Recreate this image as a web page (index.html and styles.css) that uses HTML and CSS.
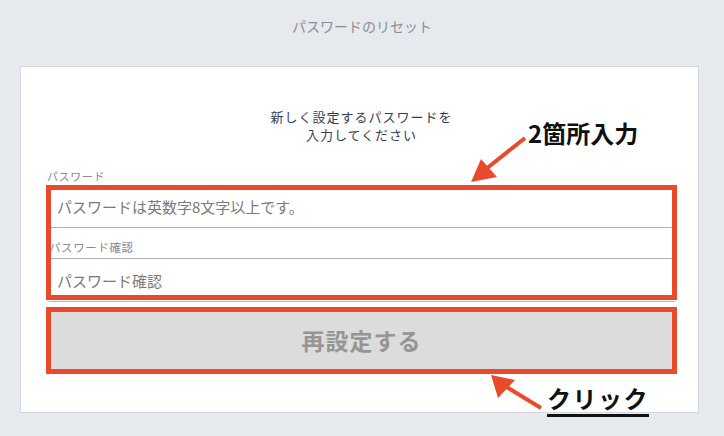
FILE: index.html
```html
<!DOCTYPE html>
<html lang="ja">

<head>
  <meta charset="UTF-8">
  <title>パスワードのリセット</title>
  <link rel="stylesheet" href="styles.css">
</head>

<body>
  <header class="topbar">パスワードのリセット</header>

  <main class="card">
    <p class="lead">新しく設定するパスワードを<br>入力してください</p>
    <form class="reset-form">
      <label class="label" for="pw">パスワード</label>
      <div class="fields">
        <input class="field" id="pw" type="password" placeholder="パスワードは英数字8文字以上です。">
        <label class="label label-inner" for="pw2">パスワード確認</label>
        <input class="field" id="pw2" type="password" placeholder="パスワード確認">
      </div>
      <button class="submit" type="button">再設定する</button>
    </form>
  </main>

  <!-- annotations drawn over the screen -->
  <div class="mark mark-fields"></div>
  <div class="mark mark-button"></div>
  <div class="note note-fields">2箇所入力</div>
  <div class="note note-click">クリック</div>
  <svg class="arrows" width="724" height="436" viewBox="0 0 724 436">
    <line x1="525" y1="138" x2="486" y2="169" stroke="#ea4a2c" stroke-width="4" />
    <polygon points="471,182 481,159 497,177" fill="#ea4a2c" />
    <line x1="541" y1="408" x2="505" y2="386" stroke="#ea4a2c" stroke-width="4" />
    <polygon points="491,375 515,380 498,398" fill="#ea4a2c" />
  </svg>
</body>

</html>
```

FILE: styles.css
```css
body {
  margin: 0;
  background-color: #e6e9ed;
  font-family: "Noto Sans CJK JP", "Noto Sans", sans-serif;
  height: 436px;
  overflow: hidden;
}

.topbar {
  height: 66px;
  box-sizing: border-box;
  padding-top: 16px;
  line-height: 20px;
  font-size: 14px;
  color: #8a8e96;
  text-align: center;
}

.card {
  display: block;
  margin: 0 25px 0 20px;
  height: 347px;
  box-sizing: border-box;
  background-color: #fff;
  border: 1px solid #d5d9df;
  padding: 41px 22px 0 26px;
}

.lead {
  margin: 0;
  font-size: 13px;
  letter-spacing: 1px;
  line-height: 18px;
  color: #323d55;
  text-align: center;
}

.reset-form {
  display: flex;
  flex-direction: column;
  margin-top: 25px;
}

.label {
  display: block;
  font-size: 11px;
  letter-spacing: 0.6px;
  line-height: 14px;
  color: #858a94;
  margin-bottom: 2px;
}

.fields {
  display: flex;
  flex-direction: column;
  border: 1px solid #b4b8bf;
  border-radius: 3px;
}

.field {
  height: 42px;
  box-sizing: border-box;
  border: none;
  margin: 0;
  padding: 0 9px;
  font-family: inherit;
  font-size: 15px;
  outline: none;
  background: #fff;
}

.field:first-child {
  border-bottom: 1px solid #aeb2b8;
}

.field::placeholder {
  color: #7a7a7a;
}

.label-inner {
  margin: 0;
  padding: 12px 0 4px 1px;
  font-size: 11.5px;
  border-bottom: 1px solid #aeb2b8;
}

.submit {
  margin-top: 7px;
  height: 62px;
  border: none;
  background-color: #dcdcdc;
  color: #959595;
  font-family: inherit;
  font-size: 23px;
  font-weight: bold;
  letter-spacing: 1px;
}

.mark {
  position: absolute;
  left: 46px;
  width: 631px;
  box-sizing: border-box;
  border: 5px solid #ea4a2c;
}

.mark-fields {
  top: 185px;
  height: 115px;
}

.mark-button {
  top: 307px;
  height: 67px;
}

.note {
  position: absolute;
  font-size: 24px;
  font-weight: bold;
  color: #111;
  line-height: 30px;
}

.note-fields {
  left: 528px;
  top: 118px;
}

.note-click {
  left: 547px;
  top: 383px;
  letter-spacing: 1.5px;
  padding-bottom: 1px;
  border-bottom: 3px solid #111;
}

.arrows {
  position: absolute;
  left: 0;
  top: 0;
}
```
